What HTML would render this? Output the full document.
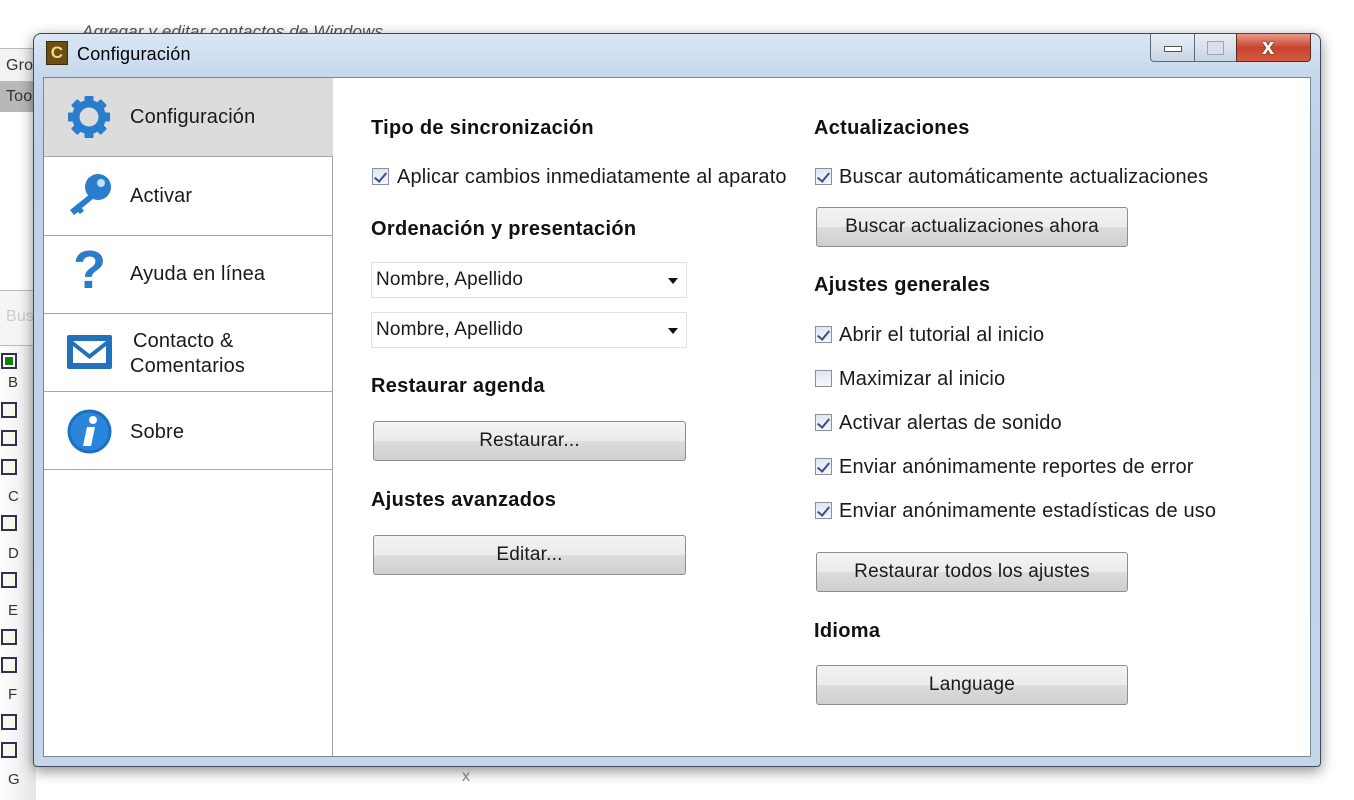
<!DOCTYPE html>
<html><head><meta charset="utf-8"><style>
*{margin:0;padding:0;box-sizing:border-box}
body{width:1354px;height:800px;overflow:hidden;background:#fff;position:relative;font-family:"Liberation Sans",sans-serif;color:#1a1a1a;font-size:20px;letter-spacing:.15px}
.a{position:absolute;white-space:nowrap}
.h{font-weight:bold;font-size:20px;color:#111;letter-spacing:.3px}
.cb{position:absolute;width:17px;height:17px;border:1px solid #8a8f99;background:linear-gradient(#dfe6f2,#f4f6fa);}
.cb.c::after{content:"";position:absolute;left:4px;top:1px;width:5px;height:10px;border:solid #3a4f8a;border-width:0 2px 2px 0;transform:rotate(40deg)}
.btn{position:absolute;height:40px;border:1px solid #8e8e8e;border-radius:3px;background:linear-gradient(#f3f3f3 0%,#ebebeb 50%,#dcdcdc 51%,#cfcfcf 100%);text-align:center;line-height:38px;font-size:19px;letter-spacing:.2px}
.dd{position:absolute;height:36px;width:316px;border:1px solid #e0e0e0;background:#fff;line-height:34px;padding-left:4px;font-size:19px}
.dd::after{content:"";position:absolute;right:8px;top:15px;border:5px solid transparent;border-top:6px solid #111}
.side{position:absolute;left:44px;width:289px;height:79px;border-bottom:1px solid #a8a8a8}
.lb{position:absolute;left:1px;width:16px;height:16px;border:2px solid #303050;background:#f6f8ec}
.lt{position:absolute;left:8px;font-size:15px;color:#333}
</style></head><body>
<div class="a" style="left:82px;top:22px;font-size:17px;color:#555;font-style:italic">Agregar y editar contactos de Windows</div>
<div class="a" style="left:0;top:48px;width:44px;height:34px;border-top:1px solid #bbb;border-bottom:1px solid #bbb;background:#f2f2f2;font-size:16px;line-height:34px;padding-left:6px;color:#333">Gro</div>
<div class="a" style="left:0;top:82px;width:44px;height:30px;background:#b8b8b8;font-size:16px;line-height:30px;padding-left:6px;color:#333">Too</div>
<div class="a" style="left:0;top:290px;width:44px;height:56px;border-top:1px solid #bbb;border-bottom:1px solid #bbb;background:#f5f5f5;font-size:16px;line-height:52px;padding-left:6px;color:#ccc">Bus</div>
<div class="a" style="left:0;top:346px;width:36px;height:454px;background:linear-gradient(90deg,#fff,#e6e6e6)"></div>
<div class="lb" style="top:353px;background:#fff"><div style="margin:2px;width:8px;height:8px;background:#108010"></div></div>
<div class="lt" style="top:374px">B</div>
<div class="lb" style="top:402px"></div><div class="lb" style="top:430px"></div><div class="lb" style="top:459px"></div>
<div class="lt" style="top:488px">C</div>
<div class="lb" style="top:515px"></div>
<div class="lt" style="top:545px">D</div>
<div class="lb" style="top:572px"></div>
<div class="lt" style="top:602px">E</div>
<div class="lb" style="top:629px"></div><div class="lb" style="top:657px"></div>
<div class="lt" style="top:686px">F</div>
<div class="lb" style="top:714px"></div><div class="lb" style="top:742px"></div>
<div class="lt" style="top:771px">G</div>
<div class="a" style="left:462px;top:768px;font-size:16px;color:#888">x</div>
<div class="a" style="left:33px;top:33px;width:1288px;height:734px;border-radius:8px 8px 4px 4px;border:1px solid #3c4a5c;background:linear-gradient(180deg,#dbe6f3 0px,#c5d7ec 45px,#bcd1e8 120px,#c3d6ea 100%);box-shadow:0 4px 14px rgba(0,0,0,.45)"></div>
<div class="a" style="left:46px;top:41px;width:22px;height:24px;background:#6b4e14;border:1px solid #3c2a08;color:#f5d77a;font-weight:bold;font-size:17px;text-align:center;line-height:22px">C</div>
<div class="a" style="left:77px;top:44px;font-size:18px;color:#000;letter-spacing:.2px">Configuración</div>
<div class="a" style="left:1150px;top:34px;width:94px;height:28px;border:1px solid #5b6a7f;border-top:none;border-radius:0 0 4px 4px;background:linear-gradient(#e8eef6,#c8d4e2)"></div>
<div class="a" style="left:1194px;top:34px;width:1px;height:28px;background:#5b6a7f"></div>
<div class="a" style="left:1164px;top:46px;width:18px;height:6px;border:1px solid #555;background:#fff"></div>
<div class="a" style="left:1207px;top:41px;width:17px;height:14px;border:1px solid #9aa;background:#dde"></div>
<div class="a" style="left:1236px;top:34px;width:75px;height:28px;border:1px solid #5b2a22;border-top:none;border-radius:0 0 4px 0;background:linear-gradient(#e99a8a,#c8452f 50%,#d35a40)"></div>
<div class="a" style="left:1262px;top:34px;font-size:22px;font-weight:bold;color:#fff;text-shadow:0 0 2px #333">x</div>
<div class="a" style="left:43px;top:77px;width:1268px;height:680px;background:#fff;border:1px solid #7a8796"></div>
<div class="a" style="left:332px;top:78px;width:1px;height:678px;background:#a0a0a0"></div>
<div class="side" style="top:78px;background:#dcdcdc"></div>
<div class="side" style="top:157px"></div>
<div class="side" style="top:235px"></div>
<div class="side" style="top:313px"></div>
<div class="side" style="top:391px"></div>
<svg class="a" style="left:66px;top:94px" width="46" height="46" viewBox="0 0 46 46"><g fill="#2a7ccc"><circle cx="23" cy="23" r="17"/><g id="t"><rect x="18.5" y="2" width="9" height="10" rx="1"/><rect x="18.5" y="34" width="9" height="10" rx="1"/></g><use href="#t" transform="rotate(45 23 23)"/><use href="#t" transform="rotate(90 23 23)"/><use href="#t" transform="rotate(135 23 23)"/></g><circle cx="23" cy="23" r="9.5" fill="#dcdcdc"/></svg>
<div class="a" style="left:130px;top:106px">Configuración</div>
<svg class="a" style="left:66px;top:172px" width="48" height="46" viewBox="0 0 48 46"><circle cx="32" cy="15" r="13" fill="#2a7ccc"/><path d="M24 22 L4 38 L8 43 L12 40 L14 42 L18 39 L16 36 L28 26Z" fill="#2a7ccc"/><circle cx="35" cy="11" r="4" fill="#bfe0ff"/></svg>
<div class="a" style="left:130px;top:185px">Activar</div>
<div class="a" style="left:73px;top:242px;font-size:54px;font-weight:bold;color:#2a7ccc;line-height:56px">?</div>
<div class="a" style="left:130px;top:263px">Ayuda en línea</div>
<svg class="a" style="left:67px;top:335px" width="45" height="34" viewBox="0 0 45 34"><rect x="0" y="0" width="45" height="34" rx="2" fill="#2370bb"/><rect x="6" y="6" width="33" height="22" fill="#fff"/><path d="M6 6 L22.5 19 L39 6 L39 11 L22.5 24 L6 11Z" fill="#2370bb"/></svg>
<div class="a" style="left:133px;top:330px">Contacto &amp;</div>
<div class="a" style="left:130px;top:355px">Comentarios</div>
<svg class="a" style="left:67px;top:409px" width="45" height="45" viewBox="0 0 45 45"><circle cx="22.5" cy="22.5" r="22" fill="#1f6fc0"/><circle cx="22.5" cy="22.5" r="19" fill="#2a86dc"/><circle cx="26" cy="11" r="4" fill="#fff"/><path d="M20 18 L28 18 L24 37 L16 37Z" fill="#fff"/></svg>
<div class="a" style="left:130px;top:421px">Sobre</div>
<div class="a h" style="left:371px;top:117px">Tipo de sincronización</div>
<div class="cb c" style="left:372px;top:168px"></div>
<div class="a" style="left:397px;top:166px">Aplicar cambios inmediatamente al aparato</div>
<div class="a h" style="left:371px;top:218px">Ordenación y presentación</div>
<div class="dd" style="left:371px;top:262px">Nombre, Apellido</div>
<div class="dd" style="left:371px;top:312px">Nombre, Apellido</div>
<div class="a h" style="left:371px;top:375px">Restaurar agenda</div>
<div class="btn" style="left:373px;top:421px;width:313px">Restaurar...</div>
<div class="a h" style="left:371px;top:489px">Ajustes avanzados</div>
<div class="btn" style="left:373px;top:535px;width:313px">Editar...</div>
<div class="a h" style="left:814px;top:117px">Actualizaciones</div>
<div class="cb c" style="left:815px;top:168px"></div>
<div class="a" style="left:839px;top:166px">Buscar automáticamente actualizaciones</div>
<div class="btn" style="left:816px;top:207px;width:312px">Buscar actualizaciones ahora</div>
<div class="a h" style="left:814px;top:274px">Ajustes generales</div>
<div class="cb c" style="left:815px;top:326px"></div><div class="a" style="left:839px;top:324px">Abrir el tutorial al inicio</div>
<div class="cb" style="left:815px;top:370px"></div><div class="a" style="left:839px;top:368px">Maximizar al inicio</div>
<div class="cb c" style="left:815px;top:414px"></div><div class="a" style="left:839px;top:412px">Activar alertas de sonido</div>
<div class="cb c" style="left:815px;top:458px"></div><div class="a" style="left:839px;top:456px">Enviar anónimamente reportes de error</div>
<div class="cb c" style="left:815px;top:502px"></div><div class="a" style="left:839px;top:500px">Enviar anónimamente estadísticas de uso</div>
<div class="btn" style="left:816px;top:552px;width:312px">Restaurar todos los ajustes</div>
<div class="a h" style="left:814px;top:620px">Idioma</div>
<div class="btn" style="left:816px;top:665px;width:312px">Language</div>
</body></html>
